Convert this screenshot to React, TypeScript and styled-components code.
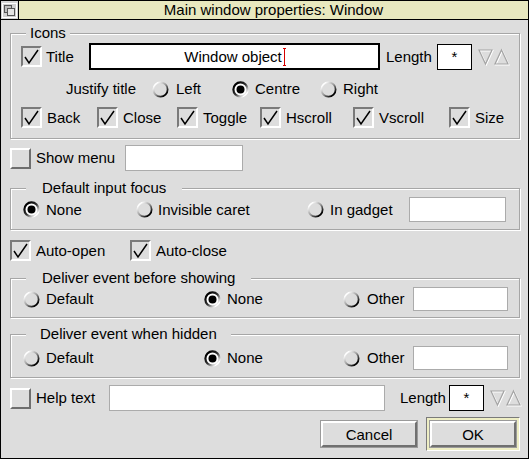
import React, { useId } from "react";
import styled, { createGlobalStyle } from "styled-components";

const GlobalStyle = createGlobalStyle`
  html, body {
    margin: 0;
    padding: 0;
    background: #dddddd;
  }
  body {
    font-family: "Liberation Sans", Arial, sans-serif;
    font-size: 15px;
    color: #000;
  }
`;

const Window = styled.div`
  width: 529px;
  height: 459px;
  box-sizing: border-box;
  border: 1px solid #000;
  background: #dddddd;
  display: flex;
  flex-direction: column;
`;

const TitleBar = styled.div`
  height: 19px;
  box-sizing: border-box;
  border-bottom: 1px solid #000;
  display: flex;
`;

const BackButton = styled.div`
  width: 18px;
  box-sizing: border-box;
  border-right: 1px solid #000;
  background: #d4d4d4;
  display: flex;
  align-items: center;
  justify-content: center;
`;

const Title = styled.div`
  flex: 1;
  background: #e8e8bf;
  text-align: center;
  line-height: 18px;
  font-size: 15px;
`;

const Body = styled.div`
  flex: 1;
  display: flex;
  flex-direction: column;
  padding: 0 8px 0 9px;
`;

const Frame = styled.div<{ $mt: number; $pad: string }>`
  position: relative;
  margin-top: ${(p) => p.$mt}px;
  border: 1px solid #a6a6a6;
  box-shadow: inset 1px 1px 0 #fff, 1px 1px 0 #fff;
  padding: ${(p) => p.$pad};
  display: flex;
  flex-direction: column;
`;

const FrameLabel = styled.span<{ $px: number }>`
  position: absolute;
  top: -10px;
  left: 15px;
  padding: 0 ${(p) => p.$px}px;
  background: #dddddd;
  line-height: 18px;
  white-space: nowrap;
`;

const Row = styled.div<{ $mt?: number; $h: number; $pl?: number }>`
  display: flex;
  align-items: center;
  height: ${(p) => p.$h}px;
  margin-top: ${(p) => p.$mt ?? 0}px;
  padding-left: ${(p) => p.$pl ?? 0}px;
  white-space: nowrap;
`;

const Option = styled.div<{ $w?: number; $gap?: number }>`
  display: flex;
  align-items: center;
  gap: ${(p) => p.$gap ?? 5}px;
  flex: none;
  width: ${(p) => (p.$w ? `${p.$w}px` : "auto")};
`;

const Text = styled.span<{ $w?: number; $ml?: number }>`
  flex: none;
  width: ${(p) => (p.$w ? `${p.$w}px` : "auto")};
  margin-left: ${(p) => p.$ml ?? 0}px;
  line-height: 18px;
`;

const Box = styled.span<{ $on?: boolean }>`
  width: 21px;
  height: 21px;
  box-sizing: border-box;
  flex: none;
  display: inline-flex;
  align-items: center;
  justify-content: center;
  background: #dddddd;
  border: 2px solid;
  border-color: ${(p) =>
    p.$on ? "#7a7a7a #ffffff #ffffff #7a7a7a" : "#ffffff #6e6e6e #6e6e6e #ffffff"};
`;

const Field = styled.div<{ $w: number; $h: number; $ml?: number; $dark?: number }>`
  width: ${(p) => p.$w}px;
  height: ${(p) => p.$h}px;
  margin-left: ${(p) => p.$ml ?? 0}px;
  flex: none;
  box-sizing: border-box;
  background: #fff;
  border: ${(p) => (p.$dark ? `${p.$dark}px solid #000` : "1px solid #ababab")};
  display: flex;
  align-items: center;
  justify-content: center;
  line-height: 18px;
`;

const Caret = styled.span`
  position: relative;
  display: inline-block;
  width: 1px;
  height: 18px;
  margin-left: 2px;
  background: #d40000;
  &::before,
  &::after {
    content: "";
    position: absolute;
    left: -1px;
    width: 3px;
    height: 1px;
    background: #d40000;
  }
  &::before {
    top: 0;
  }
  &::after {
    bottom: 0;
  }
`;

const Arrows = styled.svg<{ $ml: number }>`
  flex: none;
  margin-left: ${(p) => p.$ml}px;
`;

const RadioSvg = styled.svg`
  flex: none;
`;

const ButtonRow = styled.div`
  margin-top: 6px;
  height: 34px;
  display: flex;
  align-items: center;
  justify-content: flex-end;
  gap: 9px;
`;

const Button = styled.div<{ $w: number }>`
  width: ${(p) => p.$w}px;
  height: 26px;
  box-sizing: border-box;
  background: #dddddd;
  border: 2px solid;
  border-color: #ffffff #707070 #707070 #ffffff;
  outline: 1px solid #9a9a9a;
  display: flex;
  align-items: center;
  justify-content: center;
`;

const DefaultWell = styled.div`
  width: 94px;
  height: 34px;
  box-sizing: border-box;
  border: 1px solid;
  border-color: #7a7a7a #ffffff #ffffff #7a7a7a;
  background: #eeeec4;
  display: flex;
  align-items: center;
  justify-content: center;
`;

function Check({ on }: { on?: boolean }) {
  return (
    <Box $on={on}>
      {on && (
        <svg width="17" height="17" viewBox="0 0 17 17">
          <polyline points="2,9 6,15 15,2" fill="none" stroke="#000" strokeWidth="1.5" />
        </svg>
      )}
    </Box>
  );
}

function Radio({ on }: { on?: boolean }) {
  const id = useId().replace(/:/g, "");
  return (
    <RadioSvg width="17" height="17" viewBox="0 0 17 17">
      <defs>
        <linearGradient id={`rg${id}`} x1="0" y1="0" x2="1" y2="1">
          <stop offset="0.15" stopColor={on ? "#000" : "#ffffff"} />
          <stop offset="0.5" stopColor={on ? "#333" : "#9a9a9a"} />
          <stop offset="0.85" stopColor={on ? "#ffffff" : "#000"} />
        </linearGradient>
      </defs>
      <circle
        cx="8.5"
        cy="8.5"
        r="7.1"
        fill={on ? "#fff" : "#dddddd"}
        stroke={`url(#rg${id})`}
        strokeWidth={on ? 2.2 : 1.8}
      />
      {on && <circle cx="8.5" cy="8.5" r="4" fill="#000" />}
    </RadioSvg>
  );
}

function Adjusters({ ml }: { ml: number }) {
  return (
    <Arrows $ml={ml} width="34" height="18" viewBox="0 0 34 18">
      <polygon points="2,2 15,2 8.5,16" fill="none" stroke="#fff" strokeWidth="1.4" transform="translate(0.8,0.8)" />
      <polygon points="2,2 15,2 8.5,16" fill="none" stroke="#a4a4a4" strokeWidth="1.2" />
      <polygon points="18,16 31,16 24.5,2" fill="none" stroke="#fff" strokeWidth="1.4" transform="translate(0.8,0.8)" />
      <polygon points="18,16 31,16 24.5,2" fill="none" stroke="#a4a4a4" strokeWidth="1.2" />
    </Arrows>
  );
}

function BackIcon() {
  return (
    <svg width="15" height="15" viewBox="0 0 15 15">
      <rect x="0.5" y="0.5" width="14" height="14" fill="#cfcfcf" stroke="#fff" />
      <rect x="2.5" y="2.5" width="7" height="7" fill="#bdbdbd" stroke="#555" />
      <rect x="5.5" y="5.5" width="7" height="7" fill="#e4e4e4" stroke="#555" />
    </svg>
  );
}

const iconChecks: [string, number][] = [
  ["Back", 76],
  ["Close", 80],
  ["Toggle", 83],
  ["Hscroll", 93],
  ["Vscroll", 96],
  ["Size", 0],
];

function EventFrame({ label, mt, pad, lpx }: { label: string; mt: number; pad: string; lpx: number }) {
  return (
    <Frame $mt={mt} $pad={pad}>
      <FrameLabel $px={lpx}>{label}</FrameLabel>
      <Row $h={24}>
        <Option $w={181} $gap={6}>
          <Radio />
          <Text>Default</Text>
        </Option>
        <Option $w={139} $gap={6}>
          <Radio on />
          <Text>None</Text>
        </Option>
        <Option $w={70} $gap={7}>
          <Radio />
          <Text>Other</Text>
        </Option>
        <Field $w={95} $h={24} />
      </Row>
    </Frame>
  );
}

export default function App() {
  return (
    <>
      <GlobalStyle />
      <Window>
        <TitleBar>
          <BackButton>
            <BackIcon />
          </BackButton>
          <Title>Main window properties: Window</Title>
        </TitleBar>
        <Body>
          <Frame $mt={13} $pad="9px 0 10px 10px">
            <FrameLabel $px={4}>Icons</FrameLabel>
            <Row $h={27}>
              <Option $w={68} $gap={4}>
                <Check on />
                <Text>Title</Text>
              </Option>
              <Field $w={291} $h={27} $dark={2}>
                <span>Window object</span>
                <Caret />
              </Field>
              <Text $ml={6} $w={46}>Length</Text>
              <Field $w={35} $h={26} $ml={5} $dark={1}>
                *
              </Field>
              <Adjusters ml={5} />
            </Row>
            <Row $h={18} $mt={10} $pl={45}>
              <Text $w={86}>Justify title</Text>
              <Option $w={80} $gap={7}>
                <Radio />
                <Text>Left</Text>
              </Option>
              <Option $w={88} $gap={6}>
                <Radio on />
                <Text>Centre</Text>
              </Option>
              <Option $gap={6}>
                <Radio />
                <Text>Right</Text>
              </Option>
            </Row>
            <Row $h={21} $mt={9}>
              {iconChecks.map(([name, w]) => (
                <Option key={name} $w={w || undefined}>
                  <Check on />
                  <Text>{name}</Text>
                </Option>
              ))}
            </Row>
          </Frame>

          <Row $h={26} $mt={6}>
            <Option $w={115}>
              <Check />
              <Text>Show menu</Text>
            </Option>
            <Field $w={118} $h={26} />
          </Row>

          <Frame $mt={17} $pad="8px 0 7px 12px">
            <FrameLabel $px={16}>Default input focus</FrameLabel>
            <Row $h={25}>
              <Option $w={113} $gap={6}>
                <Radio on />
                <Text>None</Text>
              </Option>
              <Option $w={171} $gap={5}>
                <Radio />
                <Text>Invisible caret</Text>
              </Option>
              <Option $w={102} $gap={6}>
                <Radio />
                <Text>In gadget</Text>
              </Option>
              <Field $w={97} $h={25} />
            </Row>
          </Frame>

          <Row $h={21} $mt={10}>
            <Option $w={120}>
              <Check on />
              <Text>Auto-open</Text>
            </Option>
            <Option>
              <Check on />
              <Text>Auto-close</Text>
            </Option>
          </Row>

          <EventFrame label="Deliver event before showing" mt={17} pad="8px 0 6px 12px" lpx={16} />
          <EventFrame label="Deliver event when hidden" mt={16} pad="11px 0 7px 12px" lpx={14} />

          <Row $h={26} $mt={7}>
            <Option $w={99}>
              <Check />
              <Text>Help text</Text>
            </Option>
            <Field $w={276} $h={26} />
            <Text $ml={15} $w={46}>Length</Text>
            <Field $w={35} $h={26} $ml={3} $dark={1}>
              *
            </Field>
            <Adjusters ml={5} />
          </Row>

          <ButtonRow>
            <Button $w={96}>Cancel</Button>
            <DefaultWell>
              <Button $w={86}>OK</Button>
            </DefaultWell>
          </ButtonRow>
        </Body>
      </Window>
    </>
  );
}
